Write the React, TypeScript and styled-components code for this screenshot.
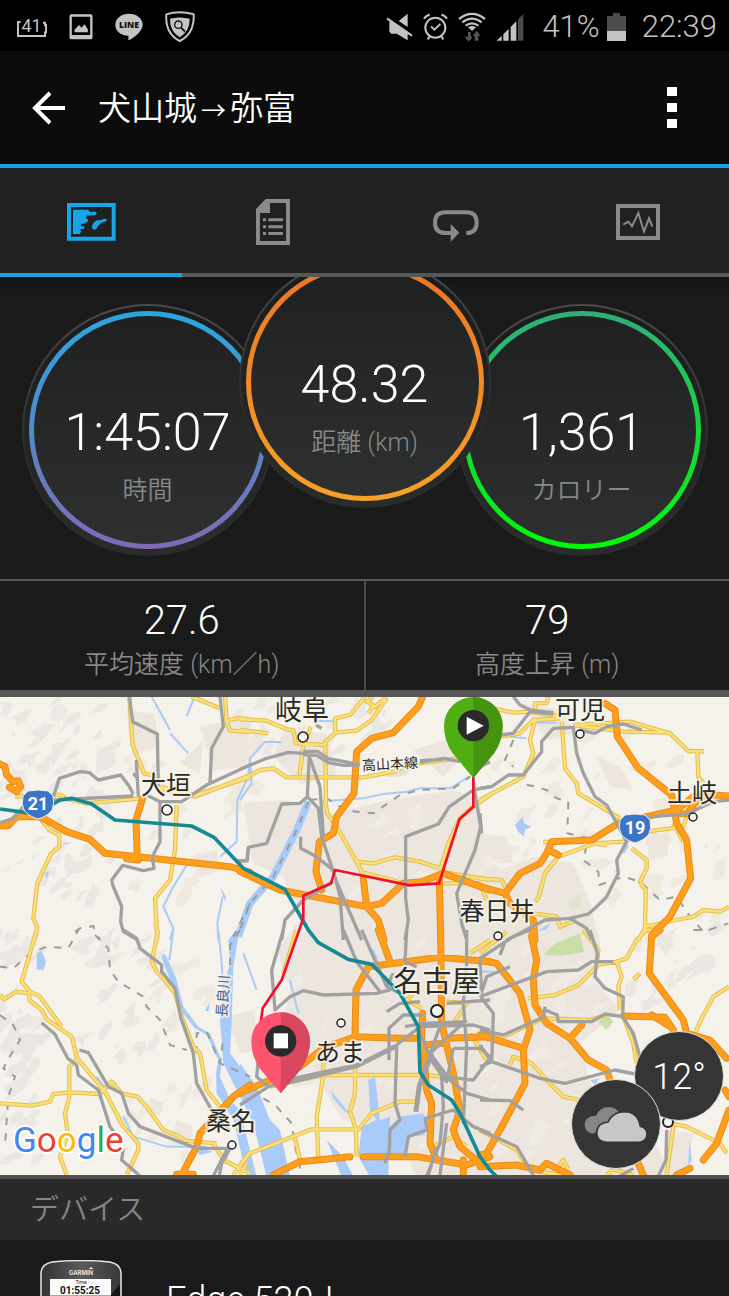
import React from "react";
import styled, { createGlobalStyle } from "styled-components";

const GlobalStyle = createGlobalStyle`
  *, *::before, *::after { box-sizing: border-box; }
  body {
    margin: 0;
    background: #1a1a1a;
    color: #fff;
    font-family: Roboto, "Noto Sans CJK JP", sans-serif;
    font-weight: 300;
  }
  button { border: 0; padding: 0; background: none; color: inherit; font: inherit; }
  h1, h2, p { margin: 0; font-weight: inherit; }
`;

const Screen = styled.div`
  display: flex;
  flex-direction: column;
  height: 100vh;
  overflow: hidden;
`;

/* ---------- status bar ---------- */

const StatusBar = styled.div`
  display: flex;
  justify-content: space-between;
  align-items: center;
  flex: none;
  height: 51px;
  padding: 2px 12px 0 17px;
  background: #000;
  color: #c3c3c3;
  font-size: 31px;
`;

const StatusGroup = styled.div<{ $gap: number }>`
  display: flex;
  align-items: center;
  gap: ${(p) => p.$gap}px;
`;

const Glyph = styled.svg`
  display: block;
  flex: none;
`;

/* ---------- title bar ---------- */

const TitleBar = styled.header`
  display: flex;
  align-items: center;
  flex: none;
  height: 117px;
  padding: 0 52px 0 32px;
  background: #0c0c0c;
  border-bottom: 4px solid #12a5e6;
`;

const Title = styled.h1`
  flex: 1;
  margin-left: 32px;
  padding-top: 6px;
  font-size: 33px;
  font-weight: 350;
  line-height: 48px;
`;

const TitleArrow = styled.span`
  padding: 0 4px;
  font-size: 25px;
`;

const IconButton = styled.button`
  display: flex;
  align-items: center;
  justify-content: center;
  height: 64px;
`;

/* ---------- tabs ---------- */

const TabBar = styled.nav`
  display: flex;
  flex: none;
  height: 109px;
  background: #212121;
`;

const Tab = styled.button<{ $active?: boolean }>`
  display: flex;
  flex: 1;
  align-items: center;
  justify-content: center;
  padding-top: 3px;
  color: ${(p) => (p.$active ? "#14a6e8" : "#8a8a8a")};
  border-bottom: 4px solid ${(p) => (p.$active ? "#1ba3e0" : "#575757")};
`;

const Content = styled.main`
  flex: 1;
  min-height: 0;
  overflow: hidden;
`;

/* ---------- gauges ---------- */

const Gauges = styled.section`
  display: flex;
  justify-content: center;
  align-items: flex-start;
  height: 304px;
  overflow: hidden;
  background: linear-gradient(#141414, #1a1a1a 16px);
  border-bottom: 2px solid #5a5a5a;
`;

const Dial = styled.div<{ $raised?: boolean }>`
  position: relative;
  z-index: ${(p) => (p.$raised ? 1 : 0)};
  flex: none;
  width: 252px;
  height: 252px;
  margin: ${(p) => (p.$raised ? "-21px -35px 0" : "27px 0 0")};
  padding: 5px;
  border: 2px solid transparent;
  border-radius: 50%;
  background:
    linear-gradient(#1a1c1b, #2a2c2c) padding-box,
    linear-gradient(#4c4a4a, #2a2c2c 60%) border-box;
`;

const Ring = styled.div<{ $from: string; $to: string }>`
  display: flex;
  flex-direction: column;
  align-items: center;
  height: 100%;
  padding-top: 85px;
  border: 5px solid transparent;
  border-radius: 50%;
  background:
    linear-gradient(#1f2120, #2e3030) padding-box,
    linear-gradient(${(p) => p.$from}, ${(p) => p.$to}) border-box;
`;

const DialValue = styled.p`
  font-size: 52px;
  line-height: 64px;
`;

const Label = styled.p`
  color: #878787;
  font-size: 25px;
  font-weight: 350;
  line-height: 32px;
`;

const DialLabel = styled(Label)`
  margin-top: 10px;
`;

/* ---------- summary ---------- */

const Summary = styled.section`
  display: flex;
  border-bottom: 7px solid #565656;
`;

const SummaryCell = styled.div`
  flex: 1;
  padding: 16px 0 9px;
  text-align: center;

  & + & { border-left: 2px solid #4a4a4a; }
`;

const SummaryValue = styled.p`
  font-size: 40px;
  line-height: 48px;
`;

const SummaryLabel = styled(Label)`
  margin-top: 4px;
`;

/* ---------- map ---------- */

const MapPanel = styled.section`
  position: relative;
  border-bottom: 4px solid #505050;
`;

const MapDrawing = styled.svg`
  display: block;
  width: 100%;
  height: auto;
`;

const Badge = styled.div<{ $right: number; $bottom: number }>`
  position: absolute;
  right: ${(p) => p.$right}px;
  bottom: ${(p) => p.$bottom}px;
  display: flex;
  align-items: center;
  justify-content: center;
  width: 90px;
  height: 90px;
  padding-top: 2px;
  border: 1px solid #dedede;
  border-radius: 50%;
  background: #353535;
  font-size: 36px;
`;

/* ---------- device ---------- */

const SectionTitle = styled.h2`
  padding: 13px 30px 12px;
  background: #292929;
  color: #858585;
  font-size: 29px;
  font-weight: 350;
  line-height: 36px;
`;

const DeviceRow = styled.div`
  display: flex;
  gap: 42px;
  padding: 20px 40px;
`;

const DeviceName = styled.p`
  padding-top: 19px;
  font-size: 36px;
  line-height: 42px;
`;

/* ---------- map data: six tiles of 720 units, three units to a pixel ---------- */

type Tile = { x: number; y: number; yellow: string; gray: string; orange: string; thin: string; dashed: string };

const tiles: Tile[] = [
  {
    x: 0, y: 0,
    yellow: "M388 20L398 165 432 250 480 262M575 20L660 55M675 20L680 95 690 122 750 126M680 95Q700 80 750 88M45 320L180 314 200 327 260 340 420 326M530 345L525 480 510 570 465 625 472 750M480 290L585 315 750 262M480 296L585 320 750 256M120 385L148 420 178 435 178 470 152 492 112 580 100 685 112 712 103 750",
    gray: "M0 398L40 385 70 350 160 330 400 318M160 320L178 265 240 245 268 248 295 270 362 255 385 285 400 312M388 20L398 95 472 132 475 290M409 210L415 320M400 250L412 265M440 315L480 335 545 335 620 285 750 225M660 20L670 110 635 175 630 280M480 335L480 455 457 500 462 535 430 542 368 526 335 570 338 585 365 650 362 695 370 725 410 748M705 512L742 512 745 475",
    orange: "M0 222L15 230 20 255 40 275 55 272 62 290 50 305 28 292M0 407L25 407 50 380 120 380 200 425 270 448 315 490 690 530 750 547M428 325L408 390 412 510M380 506L415 510",
    thin: "M455 20L510 120M510 130L565 190M580 30L560 78M750 200L745 260 712 330 710 455 660 500M560 525L520 590 490 650 520 715 510 750M655 750L652 700 668 620",
    dashed: "M225 725L240 715 280 708 290 740 300 745M750 640L700 740",
  },
  {
    x: 720, y: 0,
    yellow: "M0 88L80 92 140 118 160 120 168 160 258 165M0 120L85 130M212 110L190 170 178 255M0 272L60 240 100 235 140 262 370 262 460 245 500 225 650 205M258 340L256 155 285 130 285 85 330 75 375 20M285 128L350 122 395 90 440 25M385 70L400 45 380 35 400 20M400 55L440 20M255 330L262 370 290 410 330 480 358 530 370 560M350 515L400 520 465 502 540 515 600 535M360 545L500 582M600 540L625 460 660 385 700 350 750 315M600 545L750 570M610 580L720 580 740 630",
    gray: "M0 238L80 205 145 187 190 190 208 195 202 320 235 355 245 440 285 560M208 200L240 290 250 440M190 184L232 184 265 206 310 214 360 225M190 194L230 196 265 218 310 226 360 225M540 217L610 205 660 215M540 212L610 208M202 320L180 340 125 342 80 460 25 472 20 512 0 515M182 440L182 475 230 500 285 545M285 560L300 620 310 750M287 570L365 750M280 575L190 630 135 690 125 750M750 290L700 300 628 350 595 402 497 440 497 625 505 690 495 750M700 280L722 410 705 480 650 610 665 700 680 750M228 105L245 115M720 230L750 215",
    orange: "M548 20L535 50 460 128 395 145 350 185 342 310 290 380 280 430 238 455 228 545 245 600M0 545L120 600 180 612 380 650 425 640 490 580 545 575 610 550 750 600M370 565L380 650 415 690 432 750M598 560L602 750",
    thin: "M270 332L370 325 430 312 500 305 540 295 630 295 690 258M0 330L35 280 30 205 75 155 125 157M230 92L280 94",
    dashed: "M210 330L260 325 320 362 400 370 480 315 540 300 640 295 690 260M205 335L170 420 100 560 30 640 0 720",
  },
  {
    x: 1440, y: 0,
    yellow: "M40 55L100 68 150 65 240 80M165 60L165 40 200 40 205 20M165 90L150 150 160 190 130 260 0 330M165 90L240 85M60 140L120 130 165 85M245 95L255 235 290 280 295 310 420 385M280 105L450 95 570 130 625 183 672 184M652 185L655 260 670 280M280 105L430 125 560 128M235 500L345 460 430 455 500 425 610 410 620 380 690 320M235 500L195 550 175 625 165 635M340 460L380 465M455 475L500 510 500 535 480 575 497 600 495 715 475 750M495 710L590 690 640 680 670 660 720 665 747 650M580 400L610 455M0 565L65 570 80 600M160 670L230 680 240 710 290 690M190 456L210 456",
    gray: "M100 20L120 45 150 60 220 68M150 65L220 72M150 65L100 130 60 135M0 295L35 290 85 255 130 255 185 185 185 155 220 115 280 112 290 190 310 250 345 320 380 345 440 455 410 510 415 550 380 620 345 655 325 672 270 685 195 690 80 750M300 120L345 130 380 110 430 102 485 120M440 385L620 372 700 335 747 330M270 685L320 715 335 750M0 370L5 430",
    orange: "M375 40L405 60 412 140 475 235 575 315 590 400 620 450 632 565 570 680 515 735 515 750M590 360L500 380 415 400 335 450 215 455 200 490 180 520 120 550 75 610 0 590M205 480L235 495M75 610L90 640 160 690 165 750M590 360L640 320 700 315 747 318M590 370L620 372 650 330",
    thin: "M90 140L140 145M430 490L445 465M170 98L230 98",
    dashed: "M100 150L75 210 100 230M140 285L160 288 200 300 230 325 265 335 262 430 325 445 310 510 355 545 358 585 430 560 480 575 540 630 590 620 630 680 670 725 745 700",
  },
  {
    x: 0, y: 720,
    yellow: "M110 0L65 155 90 185 120 200 185 290M0 195L12 208 48 185 88 190 88 210 125 240 140 268 215 320 232 385 315 485 370 590 415 640 415 660 380 735M232 385L208 410 208 500 195 550 203 610 180 680 200 735M0 520L95 527 150 515 160 492 210 487 300 492 335 455 365 490 412 500 440 530 490 600 540 620 555 632 650 640M475 0L455 95 470 125 490 145 525 190 545 260 580 350 600 370 620 480 660 530M640 640L670 690 750 730M670 700L690 640M700 735L750 665",
    gray: "M125 278L165 313 203 385 230 405 235 435 295 480 330 590 345 610M238 360L265 368 325 470 365 490 385 550 420 590 590 655 690 655M370 0L410 25 420 55 485 105 485 125 525 175 543 265 580 370 590 460 635 540 690 600M370 655L365 690 420 738M690 655L665 700 658 738M680 660L640 738",
    orange: "M750 465L700 500 600 610 590 650 545 735M530 733L580 733",
    thin: "M655 0L665 100 675 260M520 0L508 90M370 560L400 620 500 650 620 650M290 440L320 480",
    dashed: "M0 110L40 115 90 70 140 50 205 55 235 0M285 15L325 55 330 120 355 155 430 200 440 230 480 270 510 345 560 360M0 255L40 285 60 330 35 370 10 415 45 440 25 500 20 570 15 650M720 0L690 45 690 120M668 340L660 400M590 370L590 310 620 305 660 400 750 440",
  },
  {
    x: 720, y: 720,
    yellow: "M170 0L130 130M0 705L30 670 215 598 355 598 395 550 480 515 540 515M90 470L250 435 560 435 600 440M250 370L250 435 230 560 235 680M345 410L345 490 330 545 348 598 350 680M165 625L180 690M690 70L750 30M545 235L500 210 530 180M620 215L680 220 640 280M580 650L640 620 680 650M690 310L740 390M0 735L20 700",
    gray: "M130 0L95 120 105 240 150 200 190 182 250 195 410 190 450 180M0 525L85 470 160 445 350 405 470 345 540 290 700 285 750 300M120 465L350 410 470 350M85 470L50 440 55 390M310 0L350 95 420 185M365 0L400 80 440 170 480 190M500 0L495 95 530 110M680 0L680 100 670 220 680 350 670 580M470 345L465 520 480 570 450 600 448 660 435 700M440 245L480 220 540 215M447 390L447 295 490 255 550 255M495 290L550 280 680 275M570 370L535 470 525 545M578 370L540 470 530 545M600 290L570 370 605 440 610 530 600 640 560 738M680 270L570 370 630 450 680 490 750 510M540 310L580 400 620 455 640 355M605 440L700 450 745 390M640 355L720 355 750 380M555 565L640 540 700 590 750 610M555 560L560 600 505 620 495 680M620 220L750 210M565 735L590 650M600 735L620 580M460 130L440 170",
    orange: "M415 0L450 95M385 110L600 82 750 95M385 110L348 180 345 320M0 490L180 410 250 355 345 320 480 325 545 325M602 0L605 280 640 430 660 540M548 250L545 325 550 350 560 480 575 520 570 640 590 690M620 325L750 320M550 345L610 340M100 735L180 695 330 680M370 680L530 680 680 705 750 680M660 540L640 600 660 650 720 700M670 735L670 690",
    thin: "M150 150L175 250M400 60L420 120M10 70L50 180",
    dashed: "M70 505L110 530 155 580 165 650 185 735",
  },
  {
    x: 1440, y: 720,
    yellow: "M0 70L80 5M310 0L355 60 350 110 295 165 225 195 145 205M345 105L410 95 440 85 470 30 500 0 540 0M410 95L425 140 415 170 420 240M747 170L700 200 665 265 645 310M460 148L480 130M0 300L70 320 190 265 330 270 380 255M90 405L100 380 155 400 200 450 250 500 300 510M430 260L460 340 470 400M570 580L620 590 720 640 740 670M580 590L560 735M0 600L110 660 150 720 240 735M220 730L250 690 265 720M380 735L400 718 460 735",
    gray: "M0 85L100 20 150 0M0 200L200 125 295 120 335 95 400 95M0 200L20 140 90 110M75 35L60 75M330 0L352 70 345 140 375 175 430 200 428 260 375 252 335 275 235 275 232 255 195 240M195 230L190 262 70 315 0 300M0 90L5 205 40 250 35 400M0 345L35 395 180 445 255 460 405 420 480 435M0 410L35 395M0 510L90 512 130 540M428 260L460 310 480 380M0 600L110 650 160 735M560 600L558 690 535 738M420 738L460 715",
    orange: "M0 90L50 100 120 190 150 300 130 360 135 460 60 600 20 670 0 675M0 315L130 355M160 0L155 20 170 90 160 150 165 225 200 280 270 325 325 390 380 420 390 450M270 325L305 285M540 0L515 20 508 130 610 270 620 310M430 258L555 262 580 300M515 255L570 290M620 310L690 330 740 385M747 540L710 640 670 690M735 480L747 500M590 735L630 715M0 710L110 705 180 720 200 700 270 735M470 690L490 735",
    thin: "M0 125L40 125",
    dashed: "M640 0L690 0",
  },
];

const water =
  "M490 790L500 800 530 870 550 950 595 1010 630 1030 665 1110 660 1160 690 1230 720 1260 770 1460 740 1460 700 1290 650 1210 648 1150 655 1110 620 1035 585 1015 545 965 515 880 485 805Z" +
  "M700 730L715 740 700 830 695 1000 690 1090 750 1170 770 1200 810 1310 860 1460 800 1460 760 1300 670 1120 660 990 668 900 690 820 685 750Z" +
  "M720 1120L770 1190 810 1290 840 1320 870 1460 820 1460 780 1280 720 1200Z" +
  "M1085 1310L1130 1290 1110 1260 1105 1170 1125 1160 1140 1290 1170 1280 1165 1460 1110 1460 1075 1400Z" +
  "M1200 1280L1270 1270 1275 1335 1225 1340 1215 1410 1165 1400 1170 1310Z" +
  "M990 1200L1040 1260 1070 1290 1030 1260 1000 1225ZM980 1350L1030 1400 1060 1460 1025 1460Z" +
  "M110 790L125 783 138 815 130 840 110 838ZM1545 405L1568 380 1572 400 1595 410 1575 420 1572 440 1555 425Z" +
  "M1770 1170L1785 1185 1800 1165ZM2068 1350L2075 1410 2065 1430ZM185 458L215 458 200 464ZM135 550L148 542 140 568ZM615 960L630 938 625 965Z" +
  "M1610 725L1650 700 1640 718ZM660 590L678 620 675 635ZM580 1370L640 1385 600 1395Z";

const urban =
  "M730 340L860 330 1000 370 1160 330 1360 300 1440 330 1450 470 1500 540 1600 500 1720 520 1770 640 1800 760 1790 880 1860 960 1740 1060 1770 1180 1900 1290 1960 1340 2010 1460 1250 1460 1180 1310 1030 1290 960 1180 880 1190 840 1050 870 900 830 780 900 690 850 560 760 520ZM380 60L460 70 480 160 400 200ZM600 110L750 80 740 230 640 240ZM540 220L610 150 600 250ZM1240 180L1340 150 1400 190 1330 260ZM1790 200L1860 230 1900 300 1830 290ZM570 500L650 480 660 540 600 560ZM1420 430L1520 440 1540 520 1440 520ZM850 120L980 130 1010 260 900 280 820 200ZM1560 40L1690 60 1740 130 1640 150ZM2000 1320L2080 1330 2060 1460 1990 1460ZM530 1290L580 1310 570 1360 520 1340ZM450 1220L490 1240 480 1280 445 1260ZM1930 420L2010 440 2000 500 1950 510ZM680 980L760 960 780 1080 720 1090Z";

/* Hill shading and fields: small irregular patches, drawn out along the ridges, spread with a fixed seed. */
const patches = (count: number, x0: number, x1: number, y0: number, y1: number, seed: number) => {
  let s = seed;
  const next = () => {
    s = (s * 16807) % 2147483647;
    return s / 2147483647;
  };
  let d = "";
  for (let i = 0; i < count; i++) {
    const cx = x0 + next() * (x1 - x0);
    const cy = y0 + next() * (y1 - y0);
    const size = 8 + next() * 24;
    const tilt = -1.3 + next() * 0.9;
    for (let k = 0; k < 8; k++) {
      const a = (k / 8) * Math.PI * 2;
      const r = size * (0.2 + next() * 1.1);
      const u = Math.cos(a) * r * 1.6;
      const v = Math.sin(a) * r * 0.8;
      const px = Math.round(cx + u * Math.cos(tilt) - v * Math.sin(tilt));
      const py = Math.round(cy + u * Math.sin(tilt) + v * Math.cos(tilt));
      d += `${k ? "L" : "M"}${px} ${py}`;
    }
    d += "Z";
  }
  return d;
};

const hills = patches(66, 0, 330, 30, 620, 11) + patches(46, 0, 120, 720, 1420, 23) + patches(26, 240, 540, 700, 1100, 37) + patches(24, 700, 1150, 30, 210, 71) + patches(14, 1900, 2180, 700, 1000, 5);
const fields = patches(46, 1500, 2180, 100, 720, 47) + patches(36, 380, 760, 60, 1300, 59) + patches(10, 380, 560, 1220, 1434, 63);
const openings = patches(50, 760, 1500, 340, 1400, 83) + patches(26, 1500, 1850, 760, 1400, 91);

const expressway =
  "M0 357L80 368 130 360 180 330 215 325 275 342 345 390 575 408 642 442 730 535 780 560 855 598 925 720 955 758 1045 808 1115 823 1200 910 1255 1010 1260 1145 1285 1185 1355 1230 1380 1270 1440 1400 1470 1440 1500 1470";
const track =
  "M1420 260L1420 350 1378 388 1317 580 1230 586 1005 540 993 580 910 617 910 685 845 870 788 955 782 1000";

const towns: { name: string; x: number; y: number; size: number; dotX: number; dotY: number; r: number }[] = [
  { name: "岐阜", x: 302, y: 30, size: 27, dotX: 303, dotY: 47, r: 5 },
  { name: "可児", x: 580, y: 29, size: 25, dotX: 580, dotY: 44, r: 4 },
  { name: "大垣", x: 166, y: 104, size: 25, dotX: 167, dotY: 120, r: 5 },
  { name: "土岐", x: 692, y: 112, size: 25, dotX: 693, dotY: 127, r: 4 },
  { name: "春日井", x: 497, y: 230, size: 25, dotX: 498, dotY: 246, r: 4 },
  { name: "名古屋", x: 437, y: 302, size: 29, dotX: 437, dotY: 321, r: 6 },
  { name: "あま", x: 340, y: 371, size: 25, dotX: 341, dotY: 333, r: 4 },
  { name: "桑名", x: 231, y: 440, size: 25, dotX: 232, dotY: 455, r: 4 },
];

const TownName = styled.text<{ $river?: boolean }>`
  fill: ${(p) => (p.$river ? "#4c6388" : "#2a2a26")};
  stroke: #f7f4ec;
  stroke-opacity: 0.75;
  stroke-width: 4px;
  stroke-linejoin: round;
  paint-order: stroke;
  text-anchor: middle;
  font-family: "Noto Sans CJK JP", sans-serif;
  font-weight: 400;
`;

const ShieldNumber = styled.text`
  fill: #fff;
  text-anchor: middle;
  font-family: Roboto, sans-serif;
  font-size: 18px;
  font-weight: 700;
`;

const MapLogo = styled.text`
  stroke: #fff;
  stroke-width: 4px;
  stroke-linejoin: round;
  paint-order: stroke;
  font-family: Roboto, sans-serif;
  font-size: 35px;
  font-weight: 450;
`;

const RouteShield = ({ x, y, value }: { x: number; y: number; value: string }) => (
  <g transform={`translate(${x} ${y})`}>
    <path d="M-10 -13Q0 -15 10 -13L15 -8Q17 0 14 6Q10 12 0 15Q-10 12 -14 6Q-17 0 -15 -8Z" fill="#3a76c8" stroke="#f5f2eb" strokeWidth="1" />
    <ShieldNumber x={0} y={6}>{value}</ShieldNumber>
  </g>
);

const Pin = ({ x, y, light, dark, children }: { x: number; y: number; light: string; dark: string; children: React.ReactNode }) => (
  <g transform={`translate(${x} ${y})`}>
    <path d="M0 157L-62 83Q-88 45 -88 0A88 86 0 0 1 88 0Q88 45 62 83Z" fill={light} />
    <path d="M0 157V-86A88 86 0 0 1 88 0Q88 45 62 83Z" fill={dark} />
    <circle r="47" fill="#2a2a2a" />
    {children}
  </g>
);

const RoadMap = () => (
  <MapDrawing viewBox="0 7 729 478" role="img" aria-label="ルートマップ">
    <rect y="7" width="729" height="478" fill="#f5f2eb" />
    <g transform="scale(0.333333)" fill="none" strokeLinejoin="round">
      <path d={urban} fill="#ece6de" />
      <path d={hills} fill="#e7e4e1" opacity="0.7" />
      <path d={fields} fill="#ece5da" opacity="0.75" />
      <path d={openings} fill="#f4f0e9" opacity="0.6" />
      <path d="M1630 795L1665 760 1740 730 1752 785 1720 792 1680 797ZM1795 995L1825 978 1840 995 1818 1020Z" fill="#cadfa8" />
      <path d="M1150 240L1240 235 1210 258 1160 262ZM1700 640L1740 610 1745 650 1715 660Z" fill="#dfe3d0" />
      <path d={water} fill="#a8cbfa" />
      <path d="M925 335L890 420 820 560 750 640 715 740" stroke="#a8cbfa" strokeWidth="22" />
      {tiles.map((t, i) => (
        <g key={i} transform={`translate(${t.x} ${t.y})`}>
          <path d={t.thin} stroke="#a8cbfa" strokeWidth="6" />
          <path d={t.dashed} stroke="#9c9c9c" strokeWidth="6" strokeDasharray="22 24" />
        </g>
      ))}
      {tiles.map((t, i) => (
        <path key={i} transform={`translate(${t.x} ${t.y})`} d={t.yellow} stroke="#e5bd4a" strokeWidth="13" />
      ))}
      {tiles.map((t, i) => (
        <path key={i} transform={`translate(${t.x} ${t.y})`} d={t.yellow} stroke="#fbe07a" strokeWidth="7" />
      ))}
      {tiles.map((t, i) => (
        <path key={i} transform={`translate(${t.x} ${t.y})`} d={t.orange} stroke="#e88d17" strokeWidth="21" strokeLinecap="round" />
      ))}
      {tiles.map((t, i) => (
        <path key={i} transform={`translate(${t.x} ${t.y})`} d={t.orange} stroke="#ff9d1d" strokeWidth="15" strokeLinecap="round" />
      ))}
      {tiles.map((t, i) => (
        <path key={i} transform={`translate(${t.x} ${t.y})`} d={t.gray} stroke="#a1a1a1" strokeWidth="10" />
      ))}
      <path d={expressway} stroke="#178995" strokeWidth="11" />
      <path d={track} stroke="#f3102f" strokeWidth="8" />
    </g>

    <RouteShield x={38} y={114} value="21" />
    <RouteShield x={635} y={138} value="19" />
    <circle cx="668" cy="432" r="5" fill="#f4f4f4" stroke="#222" strokeWidth="2" />
    {towns.map((t) => (
      <g key={t.name}>
        <circle cx={t.dotX} cy={t.dotY} r={t.r} fill="#f4f4f4" stroke="#222" strokeWidth={t.r > 5 ? 2 : 1.5} />
        <TownName x={t.x} y={t.y} fontSize={t.size}>{t.name}</TownName>
      </g>
    ))}
    <TownName x={390} y={79} fontSize={14} transform="rotate(-3 390 73)">高山本線</TownName>
    <TownName $river x={223} y={311} fontSize={14} transform="rotate(-86 223 306)">長良川</TownName>

    <g transform="scale(0.333333)">
      <Pin x={1420} y={107} light="#4fae12" dark="#45930f">
        <path d="M-20 -27V27L31 0Z" fill="#fff" />
      </Pin>
      <Pin x={842} y={1053} light="#ff5470" dark="#d8475f">
        <path d="M-21 -23H22V22H-21Z" fill="#fff" />
      </Pin>
    </g>

    <MapLogo x={13} y={462}>
      <tspan fill="#4285f4">G</tspan>
      <tspan fill="#ea4335">o</tspan>
      <tspan fill="#fbbc05">o</tspan>
      <tspan fill="#4285f4">g</tspan>
      <tspan fill="#34a853">l</tspan>
      <tspan fill="#ea4335">e</tspan>
    </MapLogo>
  </MapDrawing>
);

/* ---------- icons ---------- */

const BatteryLevelIcon = () => (
  <Glyph width="30" height="24" viewBox="50 38 91 72" fill="none">
    <path d="M61 59H53V101H135V91H138V68H135V61H129" stroke="#c3c3c3" strokeWidth="6" />
    <text x="64" y="89" fill="#c3c3c3" fontSize="54" fontFamily="Roboto" fontWeight="400">41</text>
  </Glyph>
);

const PictureIcon = () => (
  <Glyph width="24" height="26" viewBox="206 38 71 78" fill="#c3c3c3">
    <path fillRule="evenodd" d="M212 39H271Q276 39 276 44V109Q276 114 271 114H212Q207 114 207 109V44Q207 39 212 39ZM214 46V101H269V46Z" />
    <path d="M222 93V85L236 71 243 79 252 69 262 84V93Z" />
  </Glyph>
);

const LineIcon = () => (
  <Glyph width="28" height="28" viewBox="345 35 84 84">
    <path d="M387 37C410 37 428 51 428 70C428 88 405 108 385 117C385 110 386 104 385 103C361 102 346 88 346 70C346 51 364 37 387 37Z" fill="#c3c3c3" />
    <text x="387" y="79" textAnchor="middle" fill="#111" fontSize="26" fontFamily="Open Sans" fontWeight="800">LINE</text>
  </Glyph>
);

const ShieldIcon = () => (
  <Glyph width="30" height="32" viewBox="488 28 90 96" fill="none" stroke="#c3c3c3">
    <path d="M492 38Q530 26 574 38Q577 95 532 118Q488 95 492 38Z" strokeWidth="6" />
    <path d="M504 52Q532 45 561 52Q562 88 532 106Q503 88 504 52Z" fill="#c3c3c3" strokeWidth="2" />
    <circle cx="528" cy="69" r="11" stroke="#111" strokeWidth="4" />
    <path d="M536 78L548 90" stroke="#111" strokeWidth="6" />
  </Glyph>
);

const MuteIcon = () => (
  <Glyph width="27" height="28" viewBox="60 34 81 84" fill="#c3c3c3">
    <path d="M125 36V76L98 58ZM70 58L80 60 125 90V116L92 96H76L70 90V62Z" />
    <path d="M63 50L138 102" stroke="#c3c3c3" strokeWidth="6" />
  </Glyph>
);

const AlarmIcon = () => (
  <Glyph width="25" height="28" viewBox="172 36 75 84" fill="none" stroke="#c3c3c3" strokeWidth="6">
    <circle cx="209" cy="80" r="30" />
    <path d="M196 76L206 86 224 69M175 53Q181 43 192 41M227 41Q238 43 244 53M192 106L186 115M227 106L233 115" />
  </Glyph>
);

const WifiIcon = () => (
  <Glyph width="28" height="30" viewBox="288 28 84 90" fill="none" stroke="#c3c3c3" strokeWidth="7">
    <path d="M291 49Q330 18 369 49M301 59Q330 37 359 59M311 69Q330 55 349 69" />
    <path d="M330 85L318 74Q330 66 342 74Z" fill="#c3c3c3" stroke="none" />
    <path d="M318 88V102H308L320 117 332 102H326V88ZM338 114V100H332L344 84 356 100H349V114Z" fill="#555" stroke="none" />
  </Glyph>
);

const SignalIcon = () => (
  <Glyph width="28" height="28" viewBox="395 34 84 84" fill="#c3c3c3">
    <path d="M397 117L412 102V117ZM417 117V98L433 82V117ZM439 117V76L456 59V117Z" />
    <path d="M461 117V53L477 36V117Z" fill="#4a4a4a" />
  </Glyph>
);

const BatteryIcon = () => (
  <Glyph width="19" height="28" viewBox="0 0 19 28">
    <path d="M6 0H13V3H19V28H0V3H6Z" fill="#4d4d4d" />
    <path d="M0 18H19V28H0Z" fill="#c3c3c3" />
  </Glyph>
);

const BackIcon = () => (
  <Glyph width="34" height="34" viewBox="0 0 34 34" fill="none" stroke="#fff" strokeWidth="4">
    <path d="M18 2L3 17 18 32M3 17H33" />
  </Glyph>
);

const MoreIcon = () => (
  <Glyph width="10" height="42" viewBox="0 0 10 42" fill="#fff">
    <path d="M0 0H10V9H0ZM0 16H10V25H0ZM0 32H10V41H0Z" />
  </Glyph>
);

const MapTabIcon = () => (
  <Glyph width="49" height="38" viewBox="201 115 147 114" fill="currentColor">
    <path d="M207 121H341V222H207Z" fill="none" stroke="currentColor" strokeWidth="12" />
    <path d="M219 135H264Q268 143 276 142Q288 138 290 146Q290 152 276 152Q268 154 263 152Q256 156 258 161Q266 164 264 170Q260 176 248 177Q240 180 243 184Q254 184 254 189Q252 194 243 194Q238 198 245 201Q240 204 239 208H219Z" />
    <path d="M319 162Q323 170 313 171Q300 174 294 184Q290 195 282 195Q274 192 277 182Q284 164 302 166Q310 162 319 162Z" />
  </Glyph>
);

const DetailsTabIcon = () => (
  <Glyph width="34" height="46" viewBox="768 102 102 138" fill="currentColor">
    <path fillRule="evenodd" d="M797 102H870V240H768V132ZM810 114V144H780V228H858V114Z" />
    <path d="M805 160H849V169H805ZM805 181H849V190H805ZM805 201H849V210H805ZM789 160H798V169H789ZM789 181H798V190H789ZM789 201H798V210H789Z" />
  </Glyph>
);

const LapsTabIcon = () => (
  <Glyph width="46" height="40" viewBox="202 111 138 120">
    <path d="M302 204Q333 204 333 173Q333 142 302 142H240Q208 142 208 173Q208 204 240 204H256" fill="none" stroke="currentColor" strokeWidth="12" />
    <path d="M255 177L281 203 255 230Z" fill="currentColor" />
  </Glyph>
);

const ChartTabIcon = () => (
  <Glyph width="44" height="36" viewBox="751 117 132 108" fill="none" stroke="currentColor">
    <path d="M757 123H877V219H757Z" strokeWidth="12" />
    <path d="M773 179L788 170 799 184 818 144 835 200 850 160 860 185" strokeWidth="6" />
  </Glyph>
);

const CloudIcon = () => (
  <Glyph width="64" height="38" viewBox="314 528 192 112">
    <path d="M340 610Q316 606 316 582Q318 556 350 556Q362 530 388 530Q412 530 420 550L400 580Z" fill="#868686" />
    <path d="M380 636Q352 634 352 606Q354 578 386 575Q400 544 438 544Q476 546 483 588Q504 592 503 612Q502 634 480 636Z" fill="#c8c8c8" stroke="#353535" strokeWidth="5" />
  </Glyph>
);

const DeviceImage = () => (
  <Glyph width="84" height="130" viewBox="0 0 84 130">
    <defs>
      <linearGradient id="shell" x1="0" y1="0" x2="1" y2="0">
        <stop offset="0" stopColor="#333" />
        <stop offset="0.5" stopColor="#5a5a5a" />
        <stop offset="1" stopColor="#383838" />
      </linearGradient>
    </defs>
    <path d="M1 120V14Q1 4 12 2Q41 -1 70 2Q81 4 81 14V120Q81 128 70 129H12Q1 128 1 120Z" fill="url(#shell)" stroke="#e6e6e6" strokeWidth="1.5" />
    <path d="M80 24L70 36V60H80Z" fill="#161616" />
    <path d="M10 19H71V110H10Z" fill="#fbfbfb" />
    <path d="M10 35H71V37H10Z" fill="#7fb2dd" />
    <text x="41" y="15" textAnchor="middle" fill="#f0f0f0" fontSize="6" fontFamily="Inter" fontWeight="600">GARMIN</text>
    <path d="M49 9L51 7 53 9Z" fill="#fff" />
    <text x="41" y="24" textAnchor="middle" fill="#222" fontSize="5" fontFamily="Roboto" fontWeight="400">Time</text>
    <text x="40" y="34" textAnchor="middle" fill="#111" fontSize="10" fontFamily="Roboto" fontWeight="700">01:55:25</text>
  </Glyph>
);

const dials = [
  { value: "1:45:07", label: "時間", from: "#2ba6dd", to: "#8069b4" },
  { value: "48.32", label: "距離 (km)", from: "#ec7526", to: "#f6a127", raised: true },
  { value: "1,361", label: "カロリー", from: "#2fae7c", to: "#00fa06" },
];

export default function App() {
  return (
    <Screen>
      <GlobalStyle />
      <StatusBar>
        <StatusGroup $gap={22}>
          <BatteryLevelIcon />
          <PictureIcon />
          <LineIcon />
          <ShieldIcon />
        </StatusGroup>
        <StatusGroup $gap={16}>
          <StatusGroup $gap={18}>
            <StatusGroup $gap={10}>
              <MuteIcon />
              <AlarmIcon />
              <WifiIcon />
              <SignalIcon />
            </StatusGroup>
            <StatusGroup $gap={7}>
              <span>41%</span>
              <BatteryIcon />
            </StatusGroup>
          </StatusGroup>
          <span>22:39</span>
        </StatusGroup>
      </StatusBar>

      <TitleBar>
        <IconButton aria-label="戻る"><BackIcon /></IconButton>
        <Title>犬山城<TitleArrow>→</TitleArrow>弥富</Title>
        <IconButton aria-label="メニュー"><MoreIcon /></IconButton>
      </TitleBar>

      <TabBar>
        <Tab $active aria-label="マップ"><MapTabIcon /></Tab>
        <Tab aria-label="詳細"><DetailsTabIcon /></Tab>
        <Tab aria-label="ラップ"><LapsTabIcon /></Tab>
        <Tab aria-label="グラフ"><ChartTabIcon /></Tab>
      </TabBar>

      <Content>
        <Gauges>
          {dials.map((d) => (
            <Dial key={d.label} $raised={d.raised}>
              <Ring $from={d.from} $to={d.to}>
                <DialValue>{d.value}</DialValue>
                <DialLabel>{d.label}</DialLabel>
              </Ring>
            </Dial>
          ))}
        </Gauges>

        <Summary>
          <SummaryCell>
            <SummaryValue>27.6</SummaryValue>
            <SummaryLabel>平均速度 (km／h)</SummaryLabel>
          </SummaryCell>
          <SummaryCell>
            <SummaryValue>79</SummaryValue>
            <SummaryLabel>高度上昇 (m)</SummaryLabel>
          </SummaryCell>
        </Summary>

        <MapPanel>
          <RoadMap />
          <Badge $right={5} $bottom={54}>12°</Badge>
          <Badge $right={68} $bottom={6}><CloudIcon /></Badge>
        </MapPanel>

        <SectionTitle>デバイス</SectionTitle>
        <DeviceRow>
          <DeviceImage />
          <DeviceName>Edge 520J</DeviceName>
        </DeviceRow>
      </Content>
    </Screen>
  );
}
